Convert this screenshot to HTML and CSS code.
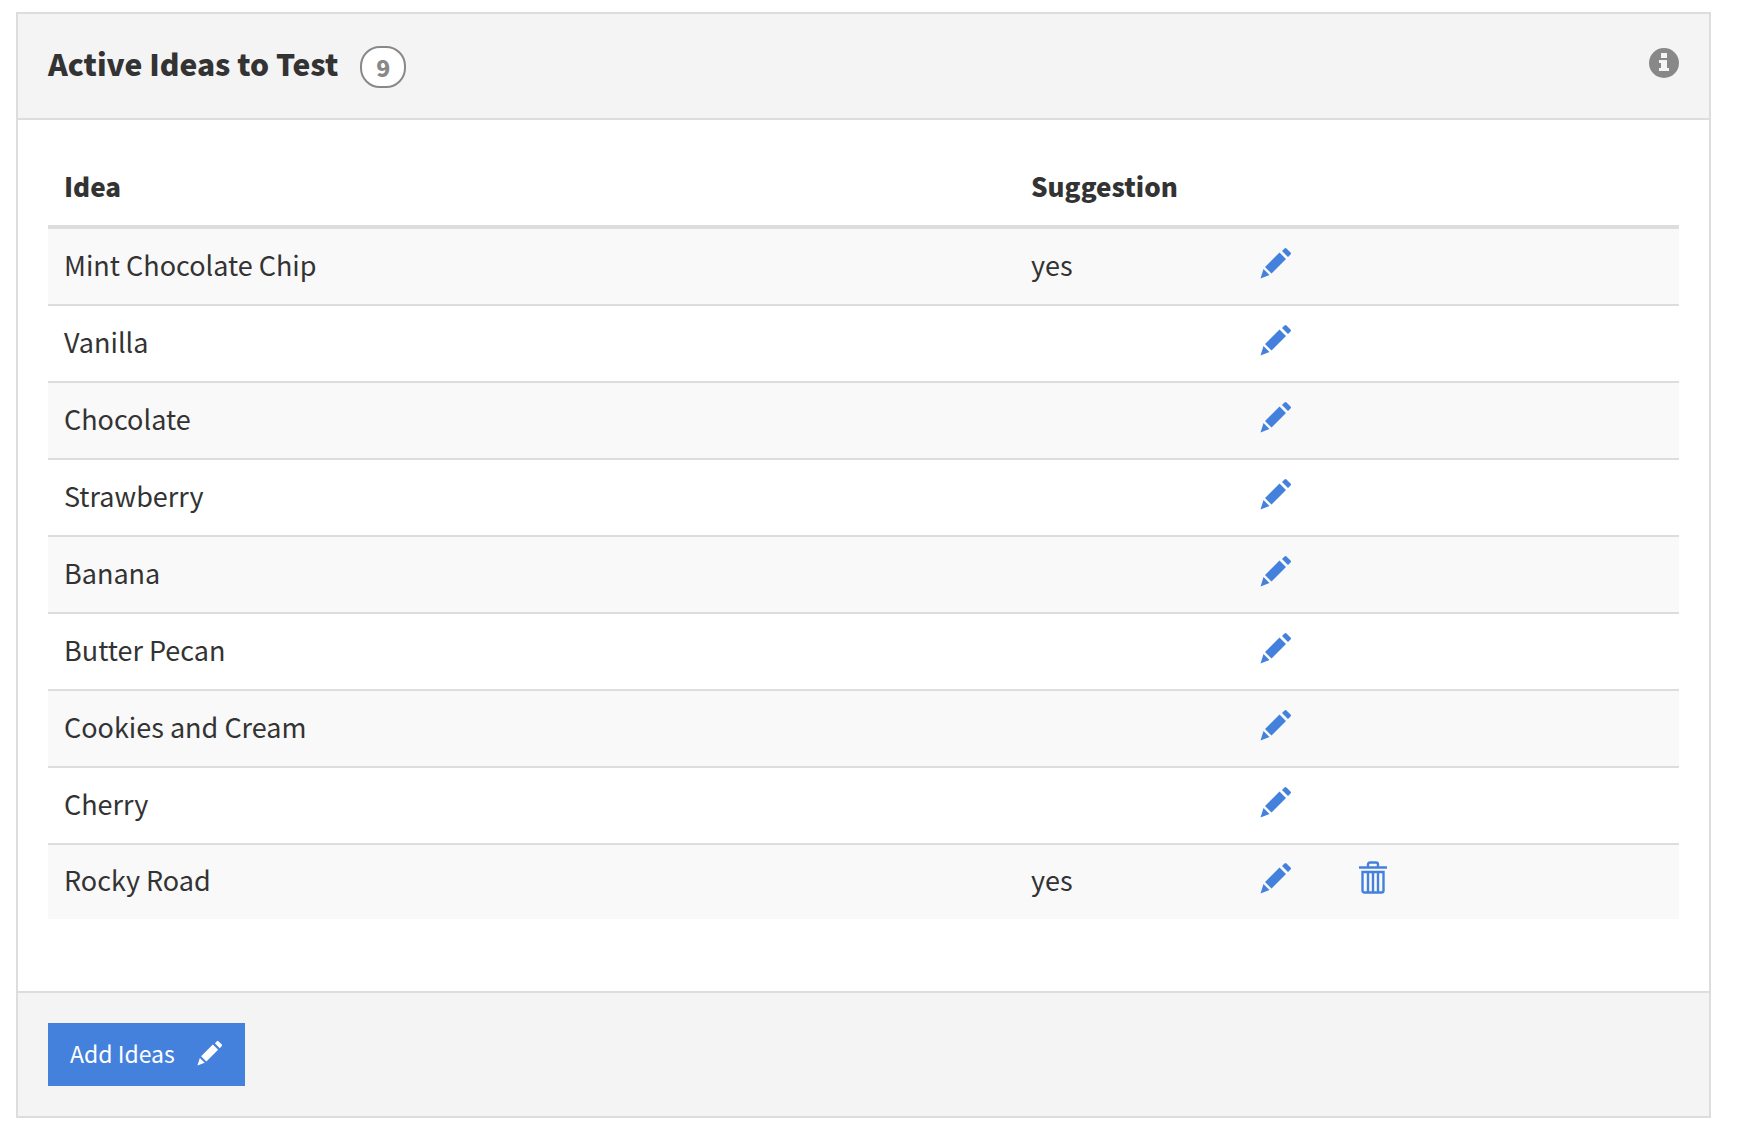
FILE: index.html
```html
<!DOCTYPE html>
<html lang="en">
<head>
<meta charset="utf-8">
<title>Active Ideas to Test</title>
<link rel="stylesheet" href="styles.css">
</head>
<body>
<svg class="sprite" aria-hidden="true">
  <symbol id="pencil" viewBox="1 0 32 32">
    <path d="M25.500 1.500q1-1 2 0l4 4q1 1 0 2l-2.500 2.500-6-6zM20.500 5.500l6.500 6.500-14.500 14.500-6.500-6.500zM4.500 22l6 6-9 3.500z"/>
  </symbol>
  <symbol id="trash" viewBox="0 0 28 34">
    <path d="M9 6V3.500q0-2 2-2h6q2 0 2 2v2.500M0 6.500h28M3.500 11h21v18.500q0 2-2 2H5.500q-2 0-2-2zM9 11v20M14 11v20M19 11v20" fill="none" stroke="currentColor" stroke-width="2.400"/>
  </symbol>
</svg>
<main class="card">
  <header class="card-header">
    <h1 class="card-title">Active Ideas to Test</h1>
    <span class="badge">9</span>
    <button class="info" type="button" aria-label="Information">
      <svg class="info-icon" viewBox="0 0 30 30"><circle cx="15" cy="15" r="15" fill="currentColor"/><path fill="#f4f4f4" d="M12 5h6v5h-6zM10 12h8v8h2v3H10v-3h2v-5h-2z"/></svg>
    </button>
  </header>
  <div class="card-body">
    <table class="ideas">
      <colgroup><col><col class="col-suggestion"><col class="col-edit"><col class="col-delete"></colgroup>
      <thead><tr><th scope="col">Idea</th><th scope="col">Suggestion</th><td></td><td></td></tr></thead>
      <tbody>
        <tr><td>Mint Chocolate Chip</td><td>yes</td><td><button class="action" type="button" aria-label="Edit"><svg class="pencil"><use href="#pencil"/></svg></button></td><td></td></tr>
        <tr><td>Vanilla</td><td></td><td><button class="action" type="button" aria-label="Edit"><svg class="pencil"><use href="#pencil"/></svg></button></td><td></td></tr>
        <tr><td>Chocolate</td><td></td><td><button class="action" type="button" aria-label="Edit"><svg class="pencil"><use href="#pencil"/></svg></button></td><td></td></tr>
        <tr><td>Strawberry</td><td></td><td><button class="action" type="button" aria-label="Edit"><svg class="pencil"><use href="#pencil"/></svg></button></td><td></td></tr>
        <tr><td>Banana</td><td></td><td><button class="action" type="button" aria-label="Edit"><svg class="pencil"><use href="#pencil"/></svg></button></td><td></td></tr>
        <tr><td>Butter Pecan</td><td></td><td><button class="action" type="button" aria-label="Edit"><svg class="pencil"><use href="#pencil"/></svg></button></td><td></td></tr>
        <tr><td>Cookies and Cream</td><td></td><td><button class="action" type="button" aria-label="Edit"><svg class="pencil"><use href="#pencil"/></svg></button></td><td></td></tr>
        <tr><td>Cherry</td><td></td><td><button class="action" type="button" aria-label="Edit"><svg class="pencil"><use href="#pencil"/></svg></button></td><td></td></tr>
        <tr><td>Rocky Road</td><td>yes</td><td><button class="action" type="button" aria-label="Edit"><svg class="pencil"><use href="#pencil"/></svg></button></td><td><button class="action" type="button" aria-label="Delete"><svg class="trash"><use href="#trash"/></svg></button></td></tr>
      </tbody>
    </table>
  </div>
  <footer class="card-footer">
    <button class="add" type="button">Add Ideas <svg class="add-icon"><use href="#pencil"/></svg></button>
  </footer>
</main>
</body>
</html>
```
FILE: styles.css
```css
* { box-sizing: border-box; }
body {
  margin: 12px 27px 20px 16px;
  background: #fff;
  color: #333;
  font: 27px/40px "Noto Sans CJK SC", "Noto Sans", sans-serif;
}
button { margin: 0; padding: 0; border: 0; background: none; font: inherit; cursor: pointer; }
svg { display: block; fill: currentColor; }
.sprite { display: none; }
.card { border: 2px solid #ddd; box-shadow: 0 2px 4px rgba(0, 0, 0, 0.08); }
.card-header {
  display: flex;
  align-items: flex-start;
  padding: 30px;
  border-bottom: 2px solid #ddd;
  background: #f4f4f4;
}
.card-title { margin: 0; font-size: 30px; line-height: 38px; font-weight: 900; }
.badge {
  margin: 2px 0 0 22px;
  width: 46px;
  height: 42px;
  border: 2px solid #888;
  border-radius: 20px;
  background: #fff;
  color: #888;
  font-size: 23px;
  line-height: 38px;
  font-weight: 900;
  text-align: center;
}
.info { margin: 4px 0 0 auto; color: #888; }
.info-icon { width: 30px; height: 30px; }
.card-body { padding: 40px 30px 72px; }
.ideas { width: 100%; border-collapse: separate; border-spacing: 0; table-layout: fixed; }
.col-suggestion { width: 229px; }
.col-edit { width: 99px; }
.col-delete { width: 336px; }
.ideas th, .ideas td { height: 77px; padding: 0 16px 4px; text-align: left; vertical-align: middle; }
.ideas th { font-size: 26px; font-weight: 900; }
.ideas thead th, .ideas thead td { height: 69px; padding-bottom: 14px; border-bottom: 4px solid #ddd; }
.ideas tbody td { border-bottom: 2px solid #ddd; }
.ideas tbody tr:last-child td { height: 74px; border-bottom: 0; }
.ideas tbody tr:nth-child(odd) { background: #f9f9f9; }
.action { display: block; margin-bottom: 4px; color: #4481dd; }
.pencil { width: 32px; height: 32px; }
.trash { width: 28px; height: 34px; }
.card-footer { padding: 30px; border-top: 2px solid #ddd; background: #f4f4f4; }
.add {
  display: flex;
  align-items: center;
  gap: 22px;
  padding: 10px 22px 13px;
  background: #4481dd;
  color: #fff;
  font-size: 23px;
  line-height: 40px;
}
.add-icon { width: 26px; height: 26px; }
```
